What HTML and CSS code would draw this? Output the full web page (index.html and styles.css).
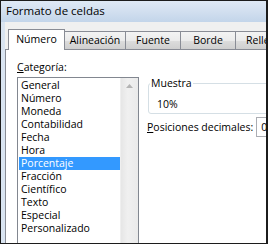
FILE: index.html
```html
<!DOCTYPE html>
<html lang="es">
<head>
    <meta charset="UTF-8">
    <title>Formato de celdas</title>
    <link rel="stylesheet" href="styles.css">
</head>
<body>
<div class="window">
    <div class="title-bar">Formato de celdas</div>
    <div class="client">
        <div class="tabs">
            <div class="tab active">Número</div>
            <div class="tab tab-alin">Alineación</div>
            <div class="tab tab-fuente">Fuente</div>
            <div class="tab tab-borde">Borde</div>
            <div class="tab tab-relleno">Relleno</div>
        </div>
        <div class="tab-panel">
            <div class="category">
                <div class="field-label"><u>C</u>ategoría:</div>
                <div class="listbox">
                    <ul class="list-items">
                        <li>General</li>
                        <li>Número</li>
                        <li>Moneda</li>
                        <li>Contabilidad</li>
                        <li>Fecha</li>
                        <li>Hora</li>
                        <li class="selected">Porcentaje</li>
                        <li>Fracción</li>
                        <li>Científico</li>
                        <li>Texto</li>
                        <li>Especial</li>
                        <li>Personalizado</li>
                    </ul>
                    <div class="scrollbar">
                        <svg class="arrow-up" width="7" height="4" viewBox="0 0 7 4"><path d="M0 4 L3.5 0 L7 4 Z" fill="#b4b4b4"/></svg>
                    </div>
                </div>
            </div>
            <div class="options">
                <div class="sample">
                    <span class="sample-title">Muestra</span>
                    <div class="sample-value">10%</div>
                </div>
                <div class="decimals">
                    <span><u>P</u>osiciones decimales:</span>
                    <div class="spin-input">0</div>
                </div>
            </div>
        </div>
    </div>
</div>
</body>
</html>
```

FILE: styles.css
```css
html, body {
    margin: 0;
    padding: 0;
    overflow: hidden;
}

body {
    font-family: 'Open Sans', 'Noto Sans', sans-serif;
    font-size: 10.5px;
    color: #000;
    background: #000;
}

.window {
    box-sizing: border-box;
    width: 268px;
    height: 244px;
    border: 1px solid #1c1c1c;
    border-right-width: 2px;
    background: #d9e4f1;
    overflow: hidden;
    display: flex;
    flex-direction: column;
}

.title-bar {
    height: 21px;
    flex: none;
    padding-left: 5px;
    line-height: 20px;
    font-size: 11.5px;
    background: linear-gradient(to bottom, #dfe9f5 0%, #d3e0f0 45%, #c3d5ea 100%);
}

.client {
    flex: 1;
    margin-left: 4px;
    background: #f0f0f0;
    display: flex;
    flex-direction: column;
    min-height: 0;
}

.tabs {
    display: flex;
    align-items: flex-end;
    height: 27px;
    padding-left: 3px;
    flex: none;
    position: relative;
    z-index: 1;
}

.tab {
    box-sizing: border-box;
    height: 18px;
    border: 1px solid #898c95;
    border-bottom: none;
    border-left: none;
    background: linear-gradient(to bottom, #f3f3f3 0%, #ebebeb 50%, #dddddd 51%, #cfcfcf 100%);
    text-align: center;
    line-height: 16px;
    white-space: nowrap;
    overflow: hidden;
    flex: none;
}

.tab.active {
    height: 21px;
    margin-bottom: -1px;
    width: 57px;
    border-left: 1px solid #898c95;
    background: #fff;
    line-height: 19px;
}

.tab-alin {
    width: 61px;
}

.tab-fuente {
    width: 55px;
}

.tab-borde {
    width: 55px;
}

.tab-relleno {
    width: 55px;
    text-align: left;
    padding-left: 10px;
}

.tab-panel {
    flex: 1;
    background: #fff;
    border-top: 1px solid #898c95;
    border-left: 1px solid #898c95;
    display: flex;
    padding-left: 11px;
    min-height: 0;
}

.category {
    width: 122px;
    flex: none;
    display: flex;
    flex-direction: column;
}

.field-label {
    height: 14px;
    line-height: 14px;
    margin-top: 10px;
    margin-bottom: 3px;
}

.listbox {
    box-sizing: border-box;
    flex: 1;
    border: 1px solid #828790;
    border-bottom: none;
    display: flex;
}

.list-items {
    list-style: none;
    margin: 0;
    padding: 1px 0 0 1px;
    flex: 1;
}

.list-items li {
    height: 13px;
    line-height: 13px;
    padding-left: 2px;
}

.list-items li.selected {
    background: #3399ff;
    color: #fff;
}

.scrollbar {
    width: 17px;
    flex: none;
    background: linear-gradient(to right, #e6e6e6 0%, #f0f0f0 40%, #eaeaea 100%);
    border-left: 1px solid #efefef;
    display: flex;
    justify-content: center;
}

.arrow-up {
    margin-top: 6px;
}

.options {
    flex: 1;
    padding-left: 8px;
    display: flex;
    flex-direction: column;
    min-width: 0;
}

.sample {
    box-sizing: border-box;
    height: 31px;
    margin: 33px -20px 0 1px;
    padding-left: 8px;
    border: 1px solid #d5dfe5;
    border-radius: 3px;
}

.sample-title {
    display: inline-block;
    margin: -7px 0 0 -7px;
    padding: 0 1px;
    line-height: 13px;
    background: #fff;
    vertical-align: top;
}

.sample-value {
    line-height: 13px;
    margin-top: 0;
}

.decimals {
    display: flex;
    align-items: center;
    margin-top: 3px;
    white-space: nowrap;
}

.spin-input {
    box-sizing: border-box;
    height: 20px;
    width: 40px;
    margin-left: 3px;
    border: 1px solid #abadb3;
    padding-left: 4px;
    line-height: 18px;
    flex: none;
}
```
